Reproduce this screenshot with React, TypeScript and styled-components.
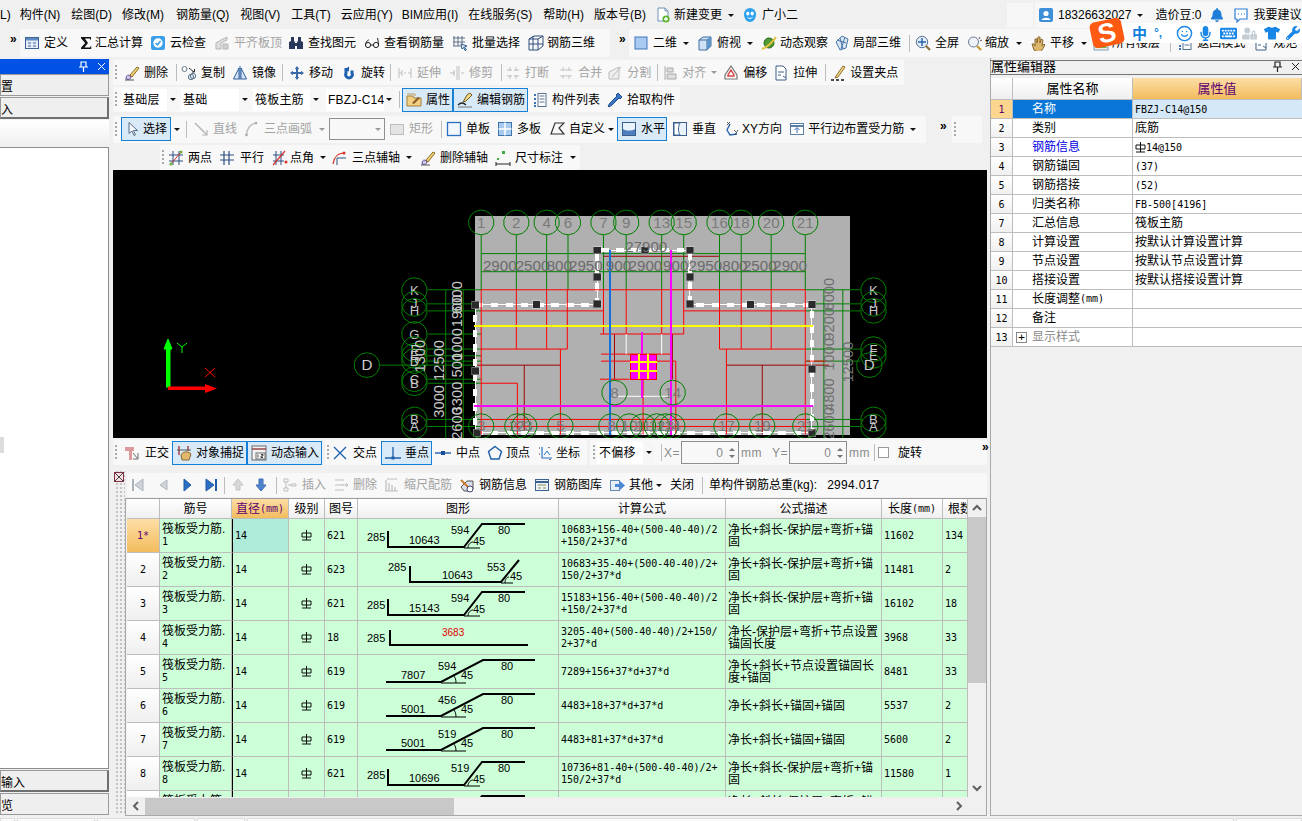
import React from 'react';
import styled, { createGlobalStyle } from 'styled-components';
import { FaMicrophone, FaKeyboard, FaTshirt, FaWrench, FaBell, FaUserLock } from 'react-icons/fa';
import { Smile } from 'lucide-react';

const Global = createGlobalStyle`
  html, body { margin: 0; padding: 0; background: #f0f0f0; overflow: hidden; }
  * { box-sizing: border-box; }
`;

const SANS = '"Liberation Sans", "Noto Sans CJK SC", sans-serif';
const MONO = '"DejaVu Sans Mono", "Noto Sans CJK SC", monospace';

const Page = styled.div`
  position: relative; width: 1302px; height: 821px; overflow: hidden; background: #f0f0f0;
  font: 12px/14px ${SANS}; color: #000; display: flex; flex-direction: column;
`;
const MenuBar = styled.div`
  height: 28px; flex: none; display: flex; align-items: center; background: #f0f0f0; padding-top: 2px;
`;
const MenuItem = styled.span<{ $mr?: number }>`
  margin-right: ${p => p.$mr ?? 10}px; white-space: nowrap; display: inline-flex; align-items: center;
`;
const GhostBox = styled.div`
  width: 26px; height: 24px; margin: 0 2px 0 auto; background: #f7f7f7;
`;
const UserBox = styled.div`
  width: 267px; height: 26px; background: #f7f7f7; display: flex; align-items: center; padding-left: 3px;
`;
const TopRow = styled.div`
  height: 30px; flex: none; display: flex; align-items: center;
`;
const Chevrons = styled.span<{ $w: number }>`
  width: ${p => p.$w}px; flex: none; align-self: flex-start; padding-top: 6px; padding-left: ${p => p.$w - 10}px;
  font: bold 12px/10px ${SANS}; letter-spacing: -1px;
`;
const Bar = styled.div<{ $w?: number; $ml?: number; $h?: number; $pl?: number }>`
  ${p => (p.$w ? `width:${p.$w}px;` : '')}
  margin-left: ${p => p.$ml ?? 0}px;
  height: ${p => p.$h ?? 25}px; flex: none; display: flex; align-items: center;
  padding-left: ${p => p.$pl ?? 2}px; background: #f8f8f8; border-radius: 2px; white-space: nowrap;
`;
const Grip = styled.span<{ $mr?: number }>`
  width: 2px; height: 15px; flex: none; margin-right: ${p => p.$mr ?? 7}px;
  background: repeating-linear-gradient(to bottom, #a8a8a8 0 2px, transparent 2px 4px);
`;
const Sep = styled.span<{ $mr?: number; $ml?: number }>`
  width: 1px; height: 17px; flex: none; background: #bcbcbc;
  margin-left: ${p => p.$ml ?? 0}px; margin-right: ${p => p.$mr ?? 5}px;
`;
const ToolItem = styled.span<{ $off?: boolean; $mr?: number }>`
  display: inline-flex; align-items: center; flex: none; margin-right: ${p => p.$mr ?? 8}px;
  color: ${p => (p.$off ? '#a3a3a3' : '#000')};
`;
const Pressed = styled.span<{ $mr?: number; $w: number }>`
  display: inline-flex; align-items: center; flex: none; width: ${p => p.$w}px; height: 24px; padding-left: 3px;
  background: #d8e9f8; border: 1px solid #167fd6; margin-right: ${p => p.$mr ?? 0}px;
`;
const IconBox = styled.svg<{ $gap?: number }>`
  width: 16px; height: 16px; flex: none; margin-right: ${p => p.$gap ?? 4}px; display: block;
`;
const Caret = styled.span<{ $ml?: number; $mr?: number; $off?: boolean }>`
  width: 0; height: 0; flex: none; border-left: 3px solid transparent; border-right: 3px solid transparent;
  border-top: 3px solid ${p => (p.$off ? '#9a9a9a' : '#111')};
  margin-left: ${p => p.$ml ?? 5}px; margin-right: ${p => p.$mr ?? 8}px;
`;
const Combo = styled.span<{ $w: number; $mr?: number; $mono?: boolean }>`
  width: ${p => p.$w}px; height: 22px; flex: none; display: flex; align-items: center; background: #fff;
  margin-right: ${p => p.$mr ?? 3}px; padding-left: 2px; position: relative;
`;
const ComboText = styled.span`flex: 1; letter-spacing: .2px;`;
const ComboArrow = styled.span`
  width: 11px; height: 100%; background: #f6f6f6; display: flex; align-items: center; justify-content: center;
`;
const FrameCombo = styled.span`
  width: 56px; height: 22px; flex: none; margin-right: 4px; background: #f8f8f8; border: 1px solid #8f8f8f;
  display: flex; align-items: center; justify-content: flex-end; padding-right: 3px;
`;

const Body = styled.div`
  flex: none; height: 758px; display: flex; align-items: stretch;
`;
const LeftPanel = styled.div`
  width: 109px; flex: none; padding-top: 1px; display: flex; flex-direction: column; overflow: hidden;
`;
const BlueTitle = styled.div`
  height: 15px; flex: none; background: #0052e4; display: flex; align-items: center; justify-content: flex-end; padding-right: 4px; gap: 9px; width: 110px;
`;
const LeftTab = styled.div<{ $deep?: boolean; $h?: number }>`
  height: ${p => p.$h ?? 22}px; flex: none; background: #efefef; border: 1px solid #9a9a9a; padding-top: 5px;
  ${p => (p.$deep ? 'border-right:2px solid #707070;border-bottom:2px solid #707070;' : '')}
  margin-bottom: 1px; white-space: nowrap; direction: rtl; text-align: left; overflow: hidden; padding-right: 4px;
`;
const LeftFill = styled.div`
  height: 27px; flex: none; background: linear-gradient(#fff, #efefef);
`;
const LeftList = styled.div`
  flex: 1; background: #fff; border: 1px solid #8c8c8c; border-left: 0; position: relative; margin-bottom: 1px;
`;
const LeftStub = styled.span`
  position: absolute; left: 0; top: 289px; width: 4px; height: 16px; background: #dcdcdc;
`;
const Center = styled.div`
  width: 874px; margin-left: 4px; flex: none; display: flex; flex-direction: column;
`;
const ToolRow = styled.div<{ $h?: number; $mb?: number; $pt?: number }>`
  height: ${p => p.$h ?? 27}px; flex: none; display: flex; align-items: center; padding-top: ${p => p.$pt ?? 2}px;
`;
const Canvas = styled.svg`
  width: 874px; height: 268px; flex: none; background: #000; display: block;
`;
const Lower = styled.div`
  flex: 1; display: flex; margin-top: 5px; min-height: 0;
`;
const Gutter = styled.div`
  width: 11px; margin-left: 1px; flex: none; padding-top: 2px; height: 345px;
  background-image: radial-gradient(#c4c4c4 .8px, transparent 1px);
  background-size: 4px 4px; background-position: 1px 12px; background-repeat: repeat;
`;
const CloseMark = styled.svg`width: 10px; height: 10px; display: block; background: #f0f0f0;`;
const TableCol = styled.div`width: 862px; flex: none; display: flex; flex-direction: column;`;
const TableBar = styled.div`
  height: 24px; margin-top: 3px; margin-left: 2px; flex: none; background: #f8f8f8; display: flex; align-items: center; padding-left: 4px; white-space: nowrap;
`;
const TableBox = styled.div`
  margin-top: 1px; width: 862px; height: 318px; flex: none; border: 1px solid #a8a8a8; border-top-color: #9c9c9c; background: #f0f0f0; padding-left: 1px; display: grid;
  grid-template-columns: 841px 18px; grid-template-rows: 298px 18px;
`;
const GridClip = styled.div`overflow: hidden; background: #fff;`;
const COLS = '33px 72px 57px 36px 33px 201px 167px 156px 61px 25px';
const GridRow = styled.div<{ $h: number }>`
  display: grid; grid-template-columns: ${COLS}; height: ${p => p.$h}px;
`;
const HeadCell = styled.div<{ $sel?: boolean; $mark?: boolean }>`
  display: flex; align-items: center; justify-content: center; white-space: nowrap; overflow: hidden;
  border-right: 1px solid #bdbdbd; border-bottom: 1px solid #bdbdbd;
  background: ${p => (p.$sel ? 'linear-gradient(#fddea6, #f2bc5e)' : 'linear-gradient(#ffffff, #efefef)')};
  color: ${p => (p.$sel ? '#5e0070' : '#000')};
`;
const Mono = styled.span`font: 10px/12px ${MONO};`;
const RowHead = styled(HeadCell)`font: 10px/12px ${MONO};`;
const Cell = styled.div<{ $sel?: boolean; $mark?: boolean; $mono?: boolean; $center?: boolean; $pl?: number }>`
  display: flex; align-items: center; overflow: hidden; white-space: nowrap;
  padding-left: ${p => p.$pl ?? 2}px;
  ${p => (p.$center ? 'justify-content:center;padding-left:0;' : '')}
  border-right: 1px solid #bdbdbd; border-bottom: 1px solid #bdbdbd;
  ${p => (p.$mark ? 'border-left:1px solid #000;' : '')}
  background: ${p => (p.$sel ? '#aeebd9' : '#ccffd8')};
  line-height: 12px;
  ${p => (p.$mono ? `font:10px/12px ${MONO};` : '')}
`;
const TwoLine = styled.div`line-height: 12px;`;
const VScroll = styled.div`
  display: flex; flex-direction: column; align-items: center; background: #f0f0f0;
`;
const Thumb = styled.div`width: 18px; height: 166px; background: #c8c8c8; flex: none;`;
const ScrollBtn = styled.div`height: 18px; flex: none; display: flex; align-items: center; justify-content: center; color: #606060; width: 18px;`;
const HScroll = styled.div`display: flex; align-items: center; background: #f0f0f0;`;
const HThumb = styled.div`width: 309px; height: 17px; background: #c8c8c8; flex: none;`;
const Right = styled.div`
  width: 312px; margin-left: 3px; flex: none; display: flex; flex-direction: column; padding-top: 2px; height: 758px;
  border-left: 1px solid #aaa; border-bottom: 1px solid #aaa;
`;
const RightTitle = styled.div`
  height: 15px; flex: none; border-top: 1px solid #777; border-bottom: 1px solid #777; margin-left: -1px;
  display: flex; align-items: center; font-size: 13px; padding-left: 1px; padding-bottom: 2px; gap: 8px; overflow: hidden; justify-content: space-between; padding-right: 2px;
`;
const PropTable = styled.div`
  margin-top: 3px; display: grid; grid-template-columns: 22px 120px 169px; grid-auto-rows: 19px; background: #fff;
`;
const PropHead = styled.div<{ $sel?: boolean }>`
  height: 22px; margin-bottom: -3px; display: flex; align-items: center; justify-content: center;
  border-right: 1px solid #bdbdbd; border-bottom: 1px solid #bdbdbd;
  background: ${p => (p.$sel ? 'linear-gradient(#fddea6, #f2bc5e)' : 'linear-gradient(#fff, #efefef)')};
  color: ${p => (p.$sel ? '#5e0070' : '#000')};
  font-size: 13px; position: relative; z-index: 1;
`;
const PropIndex = styled.div<{ $sel?: boolean }>`
  margin-top: 3px; margin-bottom: -3px; display: flex; align-items: center; justify-content: center; font: 10px ${MONO};
  border-right: 1px solid #bdbdbd; border-bottom: 1px solid #bdbdbd;
  background: ${p => (p.$sel ? '#fcd58f' : 'linear-gradient(#fff, #f0f0f0)')};
  color: ${p => (p.$sel ? '#5e0070' : '#000')};
`;
const PropName = styled.div<{ $sel?: boolean; $color?: string; $plus?: boolean }>`
  margin-top: 3px; margin-bottom: -3px; display: flex; align-items: center; padding-left: ${p => (p.$plus ? 3 : 19)}px;
  border-right: 1px solid #bdbdbd; border-bottom: 1px solid #bdbdbd;
  background: ${p => (p.$sel ? '#0a76d8' : '#fff')}; color: ${p => (p.$sel ? '#fff' : p.$color ?? '#000')};
`;
const PropValue = styled.div<{ $sel?: boolean; $mono?: boolean }>`
  margin-top: 3px; margin-bottom: -3px; display: flex; align-items: center; padding-left: 2px;
  border-bottom: 1px solid #bdbdbd;
  background: ${p => (p.$sel ? '#d5e8f8' : '#fff')};
  ${p => (p.$mono ? `font:10px ${MONO};` : '')}
`;
const PlusBox = styled.span`
  width: 11px; height: 11px; border: 1px solid #888; display: inline-flex; align-items: center; justify-content: center;
  font: 11px/9px ${MONO}; margin-right: 5px; color: #000; flex: none; background: #fff;
`;
const Status = styled.div`
  flex: none; height: 5px; display: flex; padding-top: 2px; gap: 2px; background: #f0f0f0;
`;
const StatusCell = styled.span<{ $w?: number }>`
  ${p => (p.$w ? `width:${p.$w}px;flex:none;` : 'flex:1;')} height: 3px; background: #fafafa; border: 1px solid #ddd; border-bottom: 0;
`;
const Sogou = styled.div`
  position: absolute; left: 1105px; top: 23px; width: 197px; height: 20px; background: #fff;
  display: flex; align-items: center; padding-left: 27px; gap: 0;
`;
const SogouLogo = styled.div`
  position: absolute; left: -14px; top: -3px; width: 32px; height: 26px; background: #ff5a12; border-radius: 5px;
  transform: rotate(-12deg); color: #fff; font: bold 27px/26px ${SANS}; text-align: center;
`;
const SogouCn = styled.span`
  width: 22px; color: #0f7fe0; font: bold 15px/20px "Noto Sans CJK SC", sans-serif; flex: none;
`;
const SogouSlot = styled.span`
  width: 22px; flex: none; display: flex; justify-content: flex-start; align-items: center; color: #1a86e6; font-weight: bold;
`;
const FieldLabel = styled.span<{ $mr?: number; $off?: boolean }>`
  margin-right: ${p => p.$mr ?? 3}px; color: #8a8a8a; font-size: 12px; flex: none; letter-spacing: .5px;
`;
const SpinBox = styled.span`
  width: 58px; height: 23px; flex: none; border: 1px solid #8f8f8f; display: flex; align-items: center; justify-content: flex-end;
  color: #8a8a8a; background: #f8f8f8; font-size: 12px; margin-right: 2px; padding-right: 3px; gap: 6px;
`;
const SpinArrows = styled.span`display: flex; flex-direction: column; gap: 4px;`;
const SpinUp = styled.span<{ $down?: boolean }>`
  width: 0; height: 0; border-left: 3px solid transparent; border-right: 3px solid transparent;
  ${p => (p.$down ? 'border-top:3px solid #777;' : 'border-bottom:3px solid #777;')}
`;
const Check = styled.span`
  width: 11px; height: 11px; border: 1px solid #9a9a9a; margin-right: 9px; flex: none; background: #fff;
`;
const RedNum = styled.text`fill: #e00000; font: 10px ${SANS};`;
const Weight = styled.span`margin-left: 10px; letter-spacing: .3px;`;

/* ---- icons ---- */
const P = (d: string, fill = 'none', stroke = 'none', w = 1) => <path d={d} fill={fill} stroke={stroke} strokeWidth={w} />;
const PEN = <>{P('M2 14c0-3 1-4 3-4l2 2c0 2-2 3-5 2z', '#cfc6e8', '#6d5a9e')}{P('M6 10l7-8 2 1-7 9z', '#f2d27a', '#8a6d20')}{P('M1 15h9', 'none', '#555')}</>;
const icons: Record<string, React.ReactNode> = {
  def: <><rect x="1.5" y="2.5" width="13" height="11" fill="#e7eef8" stroke="#3d6394" /><rect x="2" y="3" width="12" height="2.5" fill="#5d8cc4" />{P('M4 8h3M9 8h3M4 11h3M9 11h3', 'none', '#3d6394')}</>,
  sigma: P('M3 2h10v3.5l-1.2-2H6.8L10 8l-3.6 4.5h5.6l1.2-2V14H3v-1.2L7.2 8 3 3.2z', '#111'),
  cloud: <><rect x="1" y="1" width="14" height="14" rx="2" fill="#3a9fe8" /><circle cx="8" cy="8" r="4.7" fill="#fff" />{P('M5.6 8l1.8 1.8L10.6 6', 'none', '#3a9fe8', 1.6)}</>,
  flat: <>{P('M2 14V8l5-3 6-3v3l-6 3v6z', '#dedede', '#b5b5b5')}{P('M9 14V9h5v5z', '#cfcfcf', '#b5b5b5')}</>,
  binoc: <>{P('M3 2h3v4l1 1v7H1V7l2-1zM10 2h3v4l2 1v7H9V7l1-1z', '#29395c')}{P('M7 8h2v3H7z', '#29395c')}</>,
  glasses: <><circle cx="4" cy="10" r="2.6" fill="none" stroke="#222" /><circle cx="12" cy="10" r="2.6" fill="none" stroke="#222" />{P('M1.5 10C2 6 4 5 5 5M14.5 10c0-4-1-6-1-7M6.5 10h3', 'none', '#222')}</>,
  batch: <>{P('M2 1v10M6 1v10M10 1v8M1 3h12M1 7h12M1 11h8', 'none', '#5d6f86')}{P('M9 9l6 2-2.5 1 2 3-1.5.5-1.5-3L10 14z', '#dce8f6', '#385d8c')}</>,
  rebar3d: <>{P('M1 4l5-3h9v10l-5 4H1zM1 4h9v11M10 4l5-3M5 1v14M1 9h14', 'none', '#2d4d78')}</>,
  sq2d: <rect x="2" y="2" width="12" height="12" fill="#a9cbf2" stroke="#3f76ba" />,
  cube: <>{P('M2 5l4-3h8v9l-4 4H2z', '#cfe1f4', '#3e6e9f')}{P('M2 5h8v10M10 5l4-3', 'none', '#3e6e9f')}{P('M10 5l4-3v9l-4 4z', '#5e95c9')}</>,
  orbit: <><circle cx="8" cy="8" r="5" fill="#4f9a35" stroke="#2c6a1c" />{P('M1 14C5 13 12 7 15 2', 'none', '#e5c23f', 2)}</>,
  local3d: <>{P('M8 1l6 3-2 9-6 2-4-8z', '#d8e6f4', '#4a76a6')}{P('M3 5l9 3M6 3l3 11M11 2l-4 12', 'none', '#4a76a6')}</>,
  zoomfull: <><circle cx="7" cy="7" r="5.7" fill="#e4eefb" stroke="#5a7394" />{P('M7 3v8M3 7h8', 'none', '#2563b2', 1.4)}{P('M11 11l4 4', 'none', '#8a6a30', 2)}</>,
  mag: <><circle cx="6.5" cy="7" r="5" fill="#eef3fa" stroke="#6b7b8f" />{P('M10 11l4 4', 'none', '#c49a30', 2.2)}{P('M13 2l-1 2M15 5l-2 1', 'none', '#555')}</>,
  hand: <>{P('M4 15L2 9l2 0 1 2V4l2 0v4l1-6 2 0v6l1-4 2 1-1 6 2-2 1 1-3 5-2 3z', '#dcb66a', '#8a6a30')}</>,
  floor: <><rect x="1" y="2" width="14" height="13" fill="#f4ecd8" stroke="#7c9fc0" />{P('M2 13l4-6 3 3 2-2 3 5z', '#6bb04a')}{P('M12 1l3 3-3 1z', '#e0341f')}</>,
  newdoc: <>{P('M3 1h7l3 3v10H3z', '#fff', '#6f92b7')}{P('M10 1v3h3', 'none', '#6f92b7')}<circle cx="11" cy="12" r="3.6" fill="#5cb531" />{P('M11 10v4M9 12h4', 'none', '#fff', 1.3)}</>,
  pen: PEN,
  copy: <><circle cx="3.5" cy="4" r="2.5" fill="#fff" stroke="#60788f" /><circle cx="10" cy="12" r="2.7" fill="#dfe6ee" stroke="#60788f" /><circle cx="12" cy="11" r="2.7" fill="none" stroke="#60788f" />{P('M8 3l5 4M11 7h2.5V4', 'none', '#333')}</>,
  mirror: <>{P('M7 3L1.5 14H7z', '#d9e8f7', '#2b5e9d')}{P('M9 3l5.5 11H9z', '#d9e8f7', '#2b5e9d')}{P('M8 1v14', 'none', '#2b5e9d')}</>,
  move: P('M8 1l2.2 3H9v3h3V5.8L15 8l-3 2.2V9H9v3h1.2L8 15l-2.2-3H7V9H4v1.2L1 8l3-2.2V7h3V4H5.8z', '#3a6ba8'),
  rotate: <>{P('M5 3v5a3.4 3.4 0 1 0 6 0V5.5', 'none', '#1d5fb0', 3)}{P('M8 1.5L3.5 4.5 8 6.5z', '#1d5fb0')}</>,
  extend: P('M2 3v10M14 3v10M2 8h3M7 8h2M11 8h3M5 5v6', 'none', '#bfbfbf'),
  trim: P('M8 1v14M10 1v14M1 8h5M12 8h3M5 5v6', 'none', '#bfbfbf'),
  brk: P('M2 5h5M9 5h5M2 11h5M9 11h5M5 2v4M11 2v4M5 10v4M11 10v4', 'none', '#bfbfbf'),
  merge: P('M2 5h12M2 11h12M5 2v4M11 2v4M5 10v4M11 10v4', 'none', '#c4c4c4'),
  split: <>{P('M2 14V7l10-5v12z', '#eee', '#bbb')}{P('M14 2L5 12', 'none', '#bbb')}</>,
  align: <>{P('M3 1v14', 'none', '#aaa')}{P('M5 3h6v4H5zM5 9h9v5H5z', '#ddd', '#aaa')}</>,
  offset: <>{P('M8 1l6 9v4H2v-4z', 'none', '#777', 1.2)}{P('M8 5l3 5v1H5v-1z', 'none', '#d94444', 1.4)}</>,
  stretch: <>{P('M3 1h7l3 3v11H3z', '#fff', '#3c5f88')}{P('M5 7h6M5 10h3M10 11l3 2', 'none', '#3c5f88')}</>,
  grip: <>{P('M6 11l7-10 2 1-7 10-3 1z', '#f5d98e', '#8a6d20')}{P('M1 15h3M6 15h3M11 15h3', 'none', '#111', 1.5)}</>,
  attr: <>{P('M1 4h6l1 2h7v8H1z', '#f1cf85', '#a5813a')}{P('M6 11l6-6 2 1-6 6z', '#8a5a20')}{P('M1 2h8v2', 'none', '#c49a4a')}</>,
  edit: <>{P('M10 3l3-2 2 2-6 6-3 1z', '#f3d988', '#6f5a1e')}{P('M1 13c3-3 6-2 8 0', 'none', '#222', 1.2)}{P('M1 15h14', 'none', '#777')}</>,
  list: <>{P('M2 3h2M2 7h2M2 11h2', 'none', '#3b74b5', 2)}{P('M2 14h2', 'none', '#3b74b5', 2)}<rect x="6" y="1.5" width="8" height="13" fill="#fff" stroke="#5a7394" />{P('M7.5 4h5M7.5 7h5M7.5 10h5', 'none', '#5a7394')}</>,
  pick: <>{P('M11 1l4 4-2 2-1-1-7 7-3 2-1-1 2-3 7-7-1-1z', '#3c78c8', '#204f8e')}</>,
  cursor: P('M4 1.5v11l3-2.5 2 4.5 1.5-.7-2-4.3h4z', '#f3f7fc', '#5a6d88'),
  line: <>{P('M2 2l12 12', 'none', '#b8b8b8', 1.6)}{P('M14 9v5H9', 'none', '#b8b8b8', 1.2)}</>,
  arc: <>{P('M2.5 14C3 7 6 3 12 2', 'none', '#bfbfbf', 1.6)}<circle cx="2.5" cy="14" r="1.3" fill="#aaa" /><circle cx="12" cy="2" r="1.3" fill="#aaa" /></>,
  rectg: <rect x="1.5" y="3.5" width="13" height="10" fill="#e4e4e4" stroke="#bdbdbd" />,
  single: <rect x="1.5" y="1.5" width="13" height="13" fill="#f2f7fd" stroke="#2b6fc2" strokeWidth="1.3" />,
  multi: <><rect x="1.5" y="1.5" width="13" height="13" fill="#a9cbef" stroke="#3e72ad" />{P('M8 1.5v13M1.5 8h13', 'none', '#fff', 1.5)}</>,
  custom: P('M2 13L6 2h9l-5 5 5 6z', 'none', '#333', 1.2),
  horiz: <><rect x="1.5" y="1.5" width="13" height="13" fill="#eaf2fb" stroke="#3a5f8e" />{P('M2 8c3 2 9 2 12 0v6H2z', '#4d80bd')}</>,
  vert: <><rect x="1.5" y="1.5" width="13" height="13" fill="#eaf2fb" stroke="#3a5f8e" />{P('M8 2c-2 3-2 9 0 12H2V2z', '#fff', '#3a5f8e')}</>,
  xy: <>{P('M7 3l-3 6 3 5 7-1', 'none', '#2666b0', 1.4)}{P('M4 1l3 3M7 1L4 4M11 9l2 2M15 9l-3 5', 'none', '#333', .8)}</>,
  para: <><rect x="1.5" y="2.5" width="13" height="11" fill="#fff" stroke="#5b7ea6" />{P('M2 5h12', 'none', '#5b7ea6', 2)}{P('M8 12V7M5.5 9L8 6.5 10.5 9', 'none', '#3d6fb0')}</>,
  twop: <>{P('M1 5h14M1 11h14M5 1v14M11 1v14', 'none', '#2c4e82')}{P('M2 15L14 1', 'none', '#d8322a')}<circle cx="3" cy="14" r="1.6" fill="#6cb33f" /><circle cx="13" cy="2" r="1.6" fill="#6cb33f" /></>,
  parallel: P('M1 5h14M1 10h14M5 1v14M10 1v14', 'none', '#2c4e82', 1.2),
  angle: <>{P('M1 5h11M1 11h11M4 1v14M9 1v14', 'none', '#2c4e82')}{P('M1 15L13 1', 'none', '#d8322a', 1.2)}<circle cx="14" cy="12" r="1.5" fill="#d8322a" /></>,
  arc3: <>{P('M2 14C3 7 7 3 13 3', 'none', '#d8322a', 1.2)}{P('M6 8h9M6 8v7', 'none', '#2c4e82')}<circle cx="13" cy="3" r="1.5" fill="#d8322a" /></>,
  dim: <>{P('M1 14h14M1 12v4M15 12v4', 'none', '#222')}<rect x="7" y="1" width="3" height="3" fill="#3faa3f" /><rect x="2" y="8" width="2" height="2" fill="#3faa3f" /></>,
  ortho: <>{P('M1 2h9v4H8v9H5V6H1z', '#dd9a9a')}{P('M9 8l5 6M14 8v6H9', 'none', '#6c6c6c')}</>,
  snap: <>{P('M3 1v9M12 1v5', 'none', '#a23b3b', 1.4)}{P('M1 5h14', 'none', '#555')}{P('M5 10c2-4 8-4 10-1l-2 6H6z', '#dfba6e', '#8a6a30')}</>,
  dyn: <><rect x="1" y="1" width="14" height="14" fill="#f3f3f3" stroke="#6a6a6a" />{P('M1 4h14', 'none', '#8f3b3b', 1.4)}<rect x="5" y="8" width="9" height="6" fill="#fff" stroke="#6a6a6a" />{P('M7 9.5v3M10 9.5h2v1.5h-2v1.5h2', 'none', '#111', .8)}</>,
  xpoint: P('M2 2l12 12M14 2L2 14', 'none', '#1f63b0', 1.4),
  perp: <>{P('M0 13h16M8 2v11', 'none', '#1d5fa8', 1.3)}<rect x="6.5" y="11.5" width="3" height="3" fill="#1d5fa8" /></>,
  midp: <>{P('M0 8h16', 'none', '#1d5fa8', 1.4)}<rect x="6" y="6" width="4" height="4" fill="#1d4f98" /></>,
  vertex: P('M8 1.5l6.5 5-2.5 7.5H4L1.5 6.5z', 'none', '#1d5fa8', 1.4),
  coord: <>{P('M5 2v11h10', 'none', '#2a74c2', 1.2)}{P('M7 10l3-4 3 4', 'none', '#2a74c2', 1)}{P('M2 3h1M2 9h1M12 2v1M13 14v1', 'none', '#333', 1.2)}</>,
  first: <>{P('M2 2v12', 'none', '#aab2bc', 2)}{P('M12 2v12L4 8z', '#cfd4da', '#aab2bc')}</>,
  prev: P('M12 3v10L5 8z', '#cfd4da', '#b2b8c0'),
  next: P('M5 2v12l7-6z', '#2b6ec2', '#1f5aa6'),
  last: <>{P('M3 2v12l8-6z', '#2b6ec2', '#1f5aa6')}{P('M13 2v12', 'none', '#1f5aa6', 2)}</>,
  up: P('M8 2l5 6h-3v5H6V8H3z', '#d8d8d8', '#c4c4c4'),
  down: P('M6 2h4v6h3l-5 6-5-6h3z', '#4e84ce', '#3a6cb3'),
  ins: P('M2 2h4v3H2zM2 11h4v3H2zM9 7h5v2H9zM4 5v6M9 8H6', 'none', '#bdbdbd'),
  del: P('M2 3h9M2 8h9M2 13h9M10 8h5M13 6l2 2-2 2', 'none', '#bdbdbd'),
  scale: P('M1 14h13M2 3v11M5 6v8M8 8v6M11 10v4M3 2h10', 'none', '#bdbdbd', 1.2),
  info: <>{P('M2 10l6-6h6v8l-2 2H5z', '#d8dfe8', '#555')}{P('M2 3l7 7', 'none', '#d07a2a', 2)}<circle cx="11" cy="12" r="3" fill="#fff" stroke="#447" /></>,
  lib: <><rect x="1.5" y="2.5" width="13" height="11" fill="#eef3fa" stroke="#3b618f" />{P('M2 5h12', 'none', '#3b618f', 2)}{P('M4 8h8M4 11h3M9 11h3', 'none', '#8a8f55')}</>,
  other: <><rect x="1.5" y="3.5" width="9" height="10" fill="#e6eef8" stroke="#6688ae" />{P('M6 7h5V4l5 4.5-5 4.5V10H6z', '#4a87d4')}</>,
  avatar: <><rect x="1" y="1" width="14" height="14" rx="2" fill="#3c8ed9" /><circle cx="8" cy="6.5" r="2.6" fill="#fff" />{P('M3.5 13c1-3 8-3 9 0z', '#fff')}</>,
  suggest: <>{P('M2 2h12v10H7l-3 3v-3H2z', '#fff', '#2f7fd6', 1.2)}{P('M5 7h.8M8 7h.8M11 7h.8', 'none', '#2f7fd6', 1.4)}</>,
  bot: <>{P('M2 7a6 6 0 0 1 12 0c0 5-3 8-6 8S2 12 2 7z', '#2da0ee')}<ellipse cx="5.8" cy="6.5" rx="1.6" ry="2" fill="#fff" /><ellipse cx="10.2" cy="6.5" rx="1.6" ry="2" fill="#fff" />{P('M5.5 10.5c1.2 1.2 3.8 1.2 5 0', 'none', '#fff')}</>,
};
const Ic = ({ n, gap }: { n: string; gap?: number }) => <IconBox $gap={gap} viewBox="0 0 16 16">{icons[n]}</IconBox>;
const T = ({ i, t, off, mr, gap }: { i: string; t: string; off?: boolean; mr?: number; gap?: number }) => (
  <ToolItem $off={off} $mr={mr}><Ic n={i} gap={gap} />{t}</ToolItem>
);
const Press = ({ i, t, w, mr }: { i: string; t: string; w: number; mr?: number }) => (
  <Pressed $w={w} $mr={mr}><Ic n={i} />{t}</Pressed>
);
const Pick = ({ t, w, mr }: { t: string; w: number; mr?: number }) => (
  <Combo $w={w} $mr={mr}><ComboText>{t}</ComboText><ComboArrow><Caret $ml={0} $mr={0} /></ComboArrow></Combo>
);

/* ---- CAD ---- */
const G = '#008000', R = '#ff0000', D = '#a00000';
type Seg = [number, number, number, number];
const hv = (color: string, w: number, segs: Seg[]) => segs.map((s, i) => <line key={color + w + i} x1={s[0]} y1={s[1]} x2={s[2]} y2={s[3]} stroke={color} strokeWidth={w} vectorEffect="non-scaling-stroke" />);
const ring = (cx: number, cy: number) => Array.from({ length: 14 }, (_, k) => {
  const a = (k / 14) * Math.PI * 2 + .2;
  return `${(cx + 37 * Math.cos(a)).toFixed(1)},${(cy + 37 * Math.sin(a)).toFixed(1)}`;
}).join(' ');
const Axis = ({ x, y, t, c = '#7a7a7a', s = 44 }: { x: number; y: number; t: string; c?: string; s?: number }) => (
  <g>
    <polygon points={ring(x, y)} fill="none" stroke={G} strokeWidth="1" vectorEffect="non-scaling-stroke" />
    <text x={x} y={y + s * .36} fill={c} fontSize={s} textAnchor="middle" fontFamily="Liberation Sans, sans-serif">{t}</text>
  </g>
);
const Dim = ({ x, y, t, c = '#6b6b6b' }: { x: number; y: number; t: string; c?: string }) => (
  <text x={x} y={y} fill={c} fontSize="44" fontFamily="Liberation Sans, sans-serif">{t}</text>
);
const VDim = ({ x, y, t, c = '#c8c8c8' }: { x: number; y: number; t: string; c?: string }) => (
  <text transform={`translate(${x} ${y}) rotate(-90)`} fill={c} fontSize="44" fontFamily="Liberation Sans, sans-serif">{t}</text>
);
const Column = ({ x, y }: { x: number; y: number }) => <rect x={x - 11} y={y - 11} width="22" height="22" fill="#2a2a2a" stroke="#f4f4f4" strokeWidth="1" />;

const Drawing = () => (
  <Canvas viewBox="113 170 874 268">
    <g stroke="#00ff00" strokeWidth="1">
      <rect x="166.5" y="345" width="3.5" height="42" fill="#00ff00" />
      <path d="M168 339l4 10h-8z" fill="#00ff00" />
      <path d="M177 343l5 4 5-4M182 347v6" fill="none" />
    </g>
    <rect x="168" y="386.5" width="38" height="3.5" fill="#ff0000" />
    <path d="M205 384l12 4.5-12 4.5z" fill="#ff0000" />
    <path d="M205 368l10 9M215 368l-10 9" stroke="#ff0000" fill="none" />
    <g transform="translate(340 200) scale(.3444 .335)" shapeRendering="crispEdges">
      <rect x="392" y="48" width="1088" height="652" fill="#b0b0b0" />
      {hv(G, 1, [[410, 104, 410, 268], [512, 104, 512, 268], [600, 104, 600, 268], [662, 104, 662, 268], [765, 104, 765, 268], [831, 104, 831, 268], [934, 104, 934, 268], [998, 104, 998, 268], [1102, 104, 1102, 268], [1165, 104, 1165, 268], [1252, 104, 1252, 268], [1351, 104, 1351, 268],
        [410, 160, 1351, 160], [410, 214, 1351, 214],
        [254, 268, 410, 268], [254, 310, 410, 310], [254, 331, 410, 331], [254, 400, 410, 400], [254, 445, 410, 445], [254, 465, 410, 465], [254, 481, 410, 481], [254, 535, 410, 535], [254, 547, 410, 547], [254, 655, 410, 655], [254, 676, 410, 676],
        [1351, 268, 1511, 268], [1351, 310, 1511, 310], [1351, 331, 1511, 331], [1351, 445, 1511, 445], [1351, 481, 1511, 481], [1351, 655, 1511, 655], [1351, 676, 1511, 676], [115, 493, 392, 493],
        [307, 268, 307, 716], [1460, 268, 1460, 716], [1405, 268, 1405, 716], [358, 268, 358, 716]])}
      {hv(D, 1, [[765, 168, 1100, 168], [392, 493, 640, 493], [1122, 493, 1420, 493], [535, 493, 535, 700], [1226, 493, 1226, 700], [797, 400, 797, 535], [965, 400, 965, 535]])}
      <path d="M393 313H747V150H1016V313H1370V695H393Z" fill="none" stroke="#fff" strokeWidth="3" />
      <path d="M393 313H747V150H1016V313H1370V695H393Z" fill="none" stroke="#fff" strokeWidth="12" strokeDasharray="22 22" />
      {[[747, 150], [1016, 150], [885, 150], [747, 230], [1016, 230], [747, 310], [1016, 310], [393, 313], [570, 312], [1192, 312], [1370, 312], [393, 510], [1370, 505], [398, 695], [1370, 695]].map(([x, y]) => <Column key={x + '-' + y} x={x} y={y} />)}
      {hv(R, 1, [[410, 268, 1351, 268], [410, 331, 765, 331], [998, 331, 1351, 331], [410, 268, 410, 700], [512, 268, 512, 445], [600, 268, 600, 445], [660, 268, 660, 445], [765, 268, 765, 400], [831, 268, 831, 400], [934, 268, 934, 400], [998, 268, 998, 400], [1102, 268, 1102, 445], [1165, 268, 1165, 445], [1252, 268, 1252, 445], [1351, 268, 1351, 700],
        [410, 445, 660, 445], [1102, 445, 1351, 445], [755, 400, 998, 400], [640, 445, 640, 700], [1122, 445, 1122, 700], [410, 547, 515, 547], [515, 547, 515, 700], [410, 655, 1351, 655], [410, 676, 1351, 676], [758, 460, 965, 460], [758, 481, 975, 481], [975, 481, 975, 700], [755, 535, 840, 535], [880, 535, 880, 700], [1355, 481, 1415, 481]])}
      {hv('#ffffff', 1, [[831, 400, 831, 460], [934, 400, 934, 460], [800, 586, 960, 586]])}
      {hv('#ffff00', 2, [[390, 375, 1372, 375]])}
      {hv('#ff00ff', 2, [[390, 615, 1372, 615], [960, 150, 960, 700], [876, 395, 876, 590]])}
      {hv('#1070e0', 2, [[784, 150, 784, 700]])}
      <rect x="843" y="461" width="77" height="74" fill="#ff00ff" stroke="#ff0000" strokeWidth="3" />
      {hv('#ffff00', 2, [[868, 461, 868, 535], [895, 461, 895, 535], [843, 485, 920, 485], [843, 510, 920, 510]])}
      {[[1, 410], [2, 512], [4, 600], [6, 662], [7, 765], [9, 831], [13, 934], [15, 998], [16, 1102], [18, 1165], [20, 1252], [21, 1351]].map(([t, x]) => <Axis key={x} x={x} y={67} t={String(t)} />)}
      {[[8, 797], [14, 966]].map(([t, x]) => <Axis key={x} x={x} y={575} t={String(t)} />)}
      {[[3, 410], [22, 515], [23, 535], [5, 640], [8, 788], [10, 840], [11, 880], [12, 920], [13, 945], [14, 965], [17, 1122], [19, 1226], [21, 1351]].map(([t, x]) => <Axis key={x} x={x} y={675} t={String(t)} />)}
      {[['K', 269], ['J', 310], ['H', 331], ['G', 400], ['F', 445], ['E', 465], ['D', 481], ['C', 535], ['B', 547], ['B', 655], ['A', 676]].map(([t, y]) => <Axis key={'l' + y} x={216} y={y as number} t={t as string} c="#c8c8c8" s={38} />)}
      <Axis x={78} y={493} t="D" c="#d0d0d0" />
      {[['K', 269], ['J', 310], ['H', 331], ['F', 445], ['E', 465], ['B', 655], ['A', 676]].map(([t, y]) => <Axis key={'r' + y} x={1549} y={y as number} t={t as string} c="#c8c8c8" s={38} />)}
      <Axis x={1537} y={493} t="D" c="#c8c8c8" />
      <Dim x={828} y={155} t="27900" />
      {[[415, '2900'], [510, '2500'], [600, '800'], [665, '2950'], [772, '900'], [838, '2900'], [938, '900'], [1012, '2950'], [1110, '800'], [1170, '2500'], [1258, '2900']].map(([x, t]) => <Dim key={x as number} x={x as number} y={212} t={t as string} />)}
      <VDim x={248} y={515} t="1300" />
      <VDim x={303} y={650} t="3000" />
      <VDim x={303} y={540} t="12500" />
      <VDim x={355} y={716} t="2600" />
      <VDim x={355} y={640} t="3300" />
      <VDim x={355} y={530} t="500" />
      <VDim x={355} y={480} t="1000" />
      <VDim x={355} y={380} t="1900" />
      <VDim x={355} y={340} t="6000" />
      <VDim x={1435} y={716} t="2600" c="#6f6f6f" />
      <VDim x={1435} y={630} t="4800" c="#6f6f6f" />
      <VDim x={1435} y={510} t="1000" c="#6f6f6f" />
      <VDim x={1435} y={420} t="9200" c="#6f6f6f" />
      <VDim x={1435} y={330} t="6000" c="#6f6f6f" />
      <VDim x={1490} y={545} t="12500" c="#6f6f6f" />
    </g>
  </Canvas>
);

/* ---- steel symbol ---- */
const SteelGlyph = () => (
  <svg width="11" height="11" viewBox="0 0 11 11" style={{ display: 'block' }}>
    <path d="M1 3h9v4H1zM5.5 0v10M1 10h9" fill="none" stroke="#111" strokeWidth="1" />
  </svg>
);

/* ---- rebar shapes ---- */
type ShapeProps = { kind: 'A' | 'B' | 'C' | 'D'; v: string[] };
const ShapeTxt = styled.text`font: 11px ${SANS}; fill: #000;`;
const Shape = ({ kind, v }: ShapeProps) => {
  const L = (x: number, y: number, t: string) => <ShapeTxt x={x} y={y + 4}>{t}</ShapeTxt>;
  return (
    <svg width="200" height="33" viewBox="0 0 200 33" style={{ display: 'block' }}>
      {kind === 'A' && <>
        <path d="M30 12v16h76l18-23h43" fill="none" stroke="#000" strokeWidth="2" />
        <path d="M106 29h16M110 29c0-4 3-6 5-6" fill="none" stroke="#000" />
        {L(9, 18, v[0])}{L(51, 21, v[1])}{L(93, 11, v[2])}{L(140, 11, v[3])}{L(115, 22, '45')}
      </>}
      {kind === 'B' && <>
        <path d="M52 13v16h91l18-22" fill="none" stroke="#000" strokeWidth="2" />
        <path d="M143 30h12M147 30c0-4 2-6 4-6" fill="none" stroke="#000" />
        {L(30, 14, v[0])}{L(84, 22, v[1])}{L(129, 14, v[2])}{L(152, 23, '45')}
      </>}
      {kind === 'C' && <>
        <path d="M32 9v15h138" fill="none" stroke="#000" strokeWidth="2" />
        {L(9, 17, v[0])}
        <RedNum x="84" y="15">{v[1]}</RedNum>
      </>}
      {kind === 'D' && <>
        <path d="M28 27h55l42-22h52" fill="none" stroke="#000" strokeWidth="2" />
        <path d="M83 28h25M98 28c0-4-1-6-3-8" fill="none" stroke="#000" />
        {L(43, 20, v[0])}{L(80, 11, v[1])}{L(143, 11, v[2])}{L(103, 20, '45')}
      </>}
    </svg>
  );
};

const rows: { f: string; s: ShapeProps; calc: string[]; desc: string[]; len: string; n: string }[] = [
  { f: '621', s: { kind: 'A', v: ['285', '10643', '594', '80'] }, calc: ['10683+156-40+(500-40-40)/2', '+150/2+37*d'], desc: ['净长+斜长-保护层+弯折+锚', '固'], len: '11602', n: '134' },
  { f: '623', s: { kind: 'B', v: ['285', '10643', '553'] }, calc: ['10683+35-40+(500-40-40)/2+', '150/2+37*d'], desc: ['净长+斜长-保护层+弯折+锚', '固'], len: '11481', n: '2' },
  { f: '621', s: { kind: 'A', v: ['285', '15143', '594', '80'] }, calc: ['15183+156-40+(500-40-40)/2', '+150/2+37*d'], desc: ['净长+斜长-保护层+弯折+锚', '固'], len: '16102', n: '18' },
  { f: '18', s: { kind: 'C', v: ['285', '3683'] }, calc: ['3205-40+(500-40-40)/2+150/', '2+37*d'], desc: ['净长-保护层+弯折+节点设置', '锚固长度'], len: '3968', n: '33' },
  { f: '619', s: { kind: 'D', v: ['7807', '594', '80'] }, calc: ['7289+156+37*d+37*d'], desc: ['净长+斜长+节点设置锚固长', '度+锚固'], len: '8481', n: '33' },
  { f: '619', s: { kind: 'D', v: ['5001', '456', '80'] }, calc: ['4483+18+37*d+37*d'], desc: ['净长+斜长+锚固+锚固'], len: '5537', n: '2' },
  { f: '619', s: { kind: 'D', v: ['5001', '519', '80'] }, calc: ['4483+81+37*d+37*d'], desc: ['净长+斜长+锚固+锚固'], len: '5600', n: '2' },
  { f: '621', s: { kind: 'A', v: ['285', '10696', '519', '80'] }, calc: ['10736+81-40+(500-40-40)/2+', '150/2+37*d'], desc: ['净长+斜长-保护层+弯折+锚', '固'], len: '11580', n: '1' },
  { f: '621', s: { kind: 'A', v: ['285', '10696', '519', '80'] }, calc: ['10736+81-40+(500-40-40)/2+', '150/2+37*d'], desc: ['净长+斜长-保护层+弯折+锚', '固'], len: '11580', n: '1' },
];

const props = [
  ['名称', 'FBZJ-C14@150', 'm'], ['类别', '底筋', ''], ['钢筋信息', 'steel', 'm'], ['钢筋锚固', '(37)', 'm'], ['钢筋搭接', '(52)', 'm'],
  ['归类名称', 'FB-500[4196]', 'm'], ['汇总信息', '筏板主筋', ''], ['计算设置', '按默认计算设置计算', ''], ['节点设置', '按默认节点设置计算', ''],
  ['搭接设置', '按默认搭接设置计算', ''], ['长度调整(mm)', '', ''], ['备注', '', ''], ['显示样式', '', ''],
];

const Chev = ({ d }: { d: string }) => (
  <svg width="10" height="10" viewBox="0 0 10 10" style={{ display: 'block' }}><path d={d} fill="none" stroke="#606060" strokeWidth="2" /></svg>
);
const PinX = ({ c = '#fff' }: { c?: string }) => (
  <>
    <svg width="9" height="11" viewBox="0 0 9 11" style={{ display: 'block' }}><path d="M2 1h5v5H2zM0 6h9M4.5 6v5" fill="none" stroke={c} strokeWidth="1.2" /></svg>
    <svg width="9" height="9" viewBox="0 0 9 9" style={{ display: 'block' }}><path d="M1 1l7 7M8 1L1 8" fill="none" stroke={c} /></svg>
  </>
);

export default function App() {
  return (
    <Page>
      <Global />
      <MenuBar>
        {[['L)', 9], ['构件(N)', 11], ['绘图(D)', 10], ['修改(M)', 12], ['钢筋量(Q)', 11], ['视图(V)', 11], ['工具(T)', 10], ['云应用(Y)', 9], ['BIM应用(I)', 10], ['在线服务(S)', 11], ['帮助(H)', 10], ['版本号(B)', 9]].map(([t, m]) => (
          <MenuItem key={t as string} $mr={m as number}>{t}</MenuItem>
        ))}
        <MenuItem $mr={0}><Ic n="newdoc" gap={3} />新建变更<Caret $ml={6} $mr={8} /><Ic n="bot" gap={4} />广小二</MenuItem>
        <GhostBox />
        <UserBox>
          <Ic n="avatar" gap={4} />18326632027<Caret $ml={6} $mr={12} />造价豆:0
          <FaBell size={14} color="#1f7fd8" style={{ marginLeft: 9, marginRight: 9 }} /><Ic n="suggest" gap={4} />我要建议
        </UserBox>
      </MenuBar>
      <TopRow>
        <Chevrons $w={20}>»</Chevrons>
        <Bar $w={590} $h={28} $pl={4}>
          <T i="def" t="定义" mr={10} />
          <T i="sigma" t="汇总计算" gap={1} mr={7} />
          <T i="cloud" t="云检查" mr={8} />
          <T i="flat" t="平齐板顶" off mr={6} />
          <T i="binoc" t="查找图元" />
          <T i="glasses" t="查看钢筋量" />
          <T i="batch" t="批量选择" />
          <T i="rebar3d" t="钢筋三维" gap={3} />
        </Bar>
        <Chevrons $w={19}>»</Chevrons>
        <Bar $w={673} $h={28} $pl={4}>
          <Ic n="sq2d" gap={4} />二维<Caret $ml={6} $mr={8} />
          <T i="cube" t="俯视" mr={0} /><Caret $ml={6} $mr={8} />
          <T i="orbit" t="动态观察" gap={3} mr={6} />
          <T i="local3d" t="局部三维" gap={3} mr={8} />
          <Sep />
          <T i="zoomfull" t="全屏" mr={8} />
          <T i="mag" t="缩放" gap={2} mr={0} /><Caret $ml={7} $mr={8} />
          <T i="hand" t="平移" mr={0} /><Caret $ml={7} $mr={6} />
          <T i="floor" t="所有楼层" gap={3} mr={10} />
          <Sep $mr={6} />
          <T i="list" t="返回模式" mr={8} />
          <T i="stretch" t="规范" />
        </Bar>
      </TopRow>
      <Body>
        <LeftPanel>
          <BlueTitle><PinX /></BlueTitle>
          <LeftTab $h={22}>置</LeftTab>
          <LeftTab $h={22} $deep>入</LeftTab>
          <LeftFill />
          <LeftList><LeftStub /></LeftList>
          <LeftTab $h={22} $deep>输入</LeftTab>
          <LeftTab $h={22}>览</LeftTab>
        </LeftPanel>
        <Center>
          <ToolRow>
            <Bar $w={791}>
              <Grip />
              <T i="pen" t="删除" /><Sep $mr={4} />
              <T i="copy" t="复制" mr={7} />
              <T i="mirror" t="镜像" mr={6} /><Sep $mr={6} />
              <T i="move" t="移动" mr={8} />
              <T i="rotate" t="旋转" mr={5} /><Sep $mr={6} />
              <T i="extend" t="延伸" off mr={8} />
              <T i="trim" t="修剪" off mr={8} /><Sep $mr={3} />
              <T i="brk" t="打断" off mr={9} />
              <T i="merge" t="合并" off mr={5} />
              <T i="split" t="分割" off mr={6} /><Sep $mr={4} />
              <T i="align" t="对齐" off mr={0} /><Caret $off $ml={5} $mr={6} />
              <T i="offset" t="偏移" mr={6} />
              <T i="stretch" t="拉伸" /><Sep $mr={4} />
              <T i="grip" t="设置夹点" />
            </Bar>
          </ToolRow>
          <ToolRow $h={27}>
            <Bar $w={567} $h={25}>
              <Grip $mr={4} />
              <Pick t="基础层" w={57} />
              <Pick t="基础" w={69} />
              <Pick t="筏板主筋" w={68} mr={5} />
              <Pick t="FBZJ-C14" w={68} mr={5} />
              <Sep $mr={2} />
              <Press i="attr" t="属性" w={51} />
              <Press i="edit" t="编辑钢筋" w={75} mr={4} />
              <T i="list" t="构件列表" mr={7} />
              <T i="pick" t="拾取构件" />
            </Bar>
          </ToolRow>
          <ToolRow $h={31} $pt={3}>
            <Bar $w={813} $h={27}>
              <Grip $mr={4} />
              <Pressed $w={50}><Ic n="cursor" gap={2} />选择</Pressed>
              <Caret $ml={3} $mr={6} />
              <Sep $mr={6} />
              <T i="line" t="直线" off mr={7} />
              <T i="arc" t="三点画弧" off mr={0} /><Caret $off $ml={7} $mr={4} />
              <FrameCombo><Caret $off $ml={0} $mr={0} /></FrameCombo>
              <T i="rectg" t="矩形" off mr={8} /><Sep $mr={4} />
              <T i="single" t="单板" mr={7} />
              <T i="multi" t="多板" mr={8} />
              <T i="custom" t="自定义" gap={4} mr={0} /><Caret $ml={3} $mr={3} />
              <Press i="horiz" t="水平" w={50} mr={5} />
              <T i="vert" t="垂直" mr={7} />
              <T i="xy" t="XY方向" gap={3} mr={7} />
              <T i="para" t="平行边布置受力筋" gap={3} mr={0} /><Caret $ml={6} $mr={0} />
            </Bar>
            <Chevrons $w={24}>»</Chevrons>
            <Bar $w={30} $h={27} $ml={2}><Grip /></Bar>
          </ToolRow>
          <ToolRow $h={27} $pt={2}>
            <Bar $w={420} $ml={47} $h={25}>
              <Grip $mr={4} />
              <T i="twop" t="两点" gap={4} mr={7} />
              <T i="parallel" t="平行" gap={5} />
              <T i="angle" t="点角" gap={2} mr={0} /><Caret $ml={6} $mr={5} />
              <T i="arc3" t="三点辅轴" gap={5} mr={0} /><Caret $ml={6} $mr={8} />
              <T i="pen" t="删除辅轴" mr={7} />
              <T i="dim" t="尺寸标注" gap={4} mr={0} /><Caret $ml={7} $mr={0} />
            </Bar>
          </ToolRow>
          <Drawing />
          <ToolRow $h={27} $pt={2}>
            <Bar $w={209} $ml={0}>
              <Grip />
              <T i="ortho" t="正交" gap={5} mr={3} />
              <Press i="snap" t="对象捕捉" w={75} />
              <Press i="dyn" t="动态输入" w={75} />
            </Bar>
            <Bar $w={262} $ml={3}>
              <Grip $mr={3} />
              <T i="xpoint" t="交点" gap={5} mr={4} />
              <Press i="perp" t="垂点" w={51} mr={3} />
              <T i="midp" t="中点" gap={5} mr={7} />
              <T i="vertex" t="顶点" gap={3} mr={7} />
              <T i="coord" t="坐标" gap={3} />
            </Bar>
            <Bar $w={397} $ml={3} $pl={3}>
              <Grip $mr={2} />
              <Pick t="不偏移" w={57} mr={7} />
              <Sep $mr={2} />
              <FieldLabel $mr={1}>X=</FieldLabel>
              <SpinBox>0<SpinArrows><SpinUp /><SpinUp $down /></SpinArrows></SpinBox>
              <FieldLabel $mr={10}>mm</FieldLabel>
              <FieldLabel $mr={1}>Y=</FieldLabel>
              <SpinBox>0<SpinArrows><SpinUp /><SpinUp $down /></SpinArrows></SpinBox>
              <FieldLabel $mr={4}>mm</FieldLabel>
              <Sep $mr={3} />
              <Check />旋转
              <Chevrons $w={70} style={{ paddingTop: 2 }}>»</Chevrons>
            </Bar>
          </ToolRow>
          <Lower>
            <Gutter>
              <CloseMark viewBox="0 0 10 10"><rect x=".5" y=".5" width="9" height="9" fill="#f4e0e0" stroke="#803040" /><path d="M1 1l8 8M9 1L1 9" stroke="#444" /></CloseMark>
            </Gutter>
            <TableCol>
              <TableBar>
                <T i="first" t="" gap={8} mr={0} />
                <T i="prev" t="" gap={8} mr={0} />
                <T i="next" t="" gap={8} mr={0} />
                <T i="last" t="" gap={2} mr={0} />
                <Sep $ml={3} $mr={5} />
                <T i="up" t="" gap={7} mr={0} />
                <T i="down" t="" gap={7} mr={0} />
                <Sep $ml={0} $mr={5} />
                <T i="ins" t="插入" off mr={7} />
                <T i="del" t="删除" off mr={7} />
                <T i="scale" t="缩尺配筋" off mr={7} />
                <T i="info" t="钢筋信息" mr={7} />
                <T i="lib" t="钢筋图库" mr={7} />
                <T i="other" t="其他" mr={0} /><Caret $ml={3} $mr={8} />
                <ToolItem $mr={8}>关闭</ToolItem>
                <Sep $mr={6} />
                <ToolItem>单构件钢筋总重(kg):<Weight>2994.017</Weight></ToolItem>
              </TableBar>
              <TableBox>
                <GridClip>
                  <GridRow $h={20}>
                    <HeadCell />
                    <HeadCell>筋号</HeadCell>
                    <HeadCell $sel>直径<Mono>(mm)</Mono></HeadCell>
                    <HeadCell>级别</HeadCell>
                    <HeadCell>图号</HeadCell>
                    <HeadCell>图形</HeadCell>
                    <HeadCell>计算公式</HeadCell>
                    <HeadCell>公式描述</HeadCell>
                    <HeadCell>长度<Mono>(mm)</Mono></HeadCell>
                    <HeadCell style={{ justifyContent: 'flex-start', paddingLeft: 5 }}>根数</HeadCell>
                  </GridRow>
                  {rows.map((r, i) => (
                    <GridRow key={i} $h={34}>
                      {i === 0 ? <RowHead $sel>1*</RowHead> : <RowHead>{i + 1}</RowHead>}
                      <Cell><TwoLine>筏板受力筋.<br /><Mono>{i + 1}</Mono></TwoLine></Cell>
                      <Cell $mark $mono $sel={i === 0}>14</Cell>
                      <Cell $center><SteelGlyph /></Cell>
                      <Cell $mono>{r.f}</Cell>
                      <Cell $pl={0}><Shape {...r.s} /></Cell>
                      <Cell $mono><TwoLine>{r.calc.map(c => <div key={c}>{c}</div>)}</TwoLine></Cell>
                      <Cell><TwoLine>{r.desc.map(c => <div key={c}>{c}</div>)}</TwoLine></Cell>
                      <Cell $mono>{r.len}</Cell>
                      <Cell $mono>{r.n}</Cell>
                    </GridRow>
                  ))}
                </GridClip>
                <VScroll>
                  <ScrollBtn><Chev d="M1 7l4-4 4 4" /></ScrollBtn>
                  <Thumb />
                  <div style={{ flex: 1 }} />
                  <ScrollBtn><Chev d="M1 3l4 4 4-4" /></ScrollBtn>
                </VScroll>
                <HScroll>
                  <ScrollBtn><Chev d="M7 1L3 5l4 4" /></ScrollBtn>
                  <HThumb />
                  <div style={{ flex: 1 }} />
                  <ScrollBtn><Chev d="M3 1l4 4-4 4" /></ScrollBtn>
                </HScroll>
                <div />
              </TableBox>
            </TableCol>
          </Lower>
        </Center>
        <Right>
          <RightTitle>属性编辑器<span style={{ display: 'flex', gap: 9, alignItems: 'center' }}><PinX c="#222" /></span></RightTitle>
          <PropTable>
            <PropHead />
            <PropHead>属性名称</PropHead>
            <PropHead $sel>属性值</PropHead>
            {props.map(([name, val, m], i) => (
              <React.Fragment key={name}>
                <PropIndex $sel={i === 0}>{i + 1}</PropIndex>
                <PropName $sel={i === 0} $color={i === 2 ? '#0000e6' : i === 12 ? '#8a8a8a' : undefined} $plus={i === 12}>
                  {i === 12 && <PlusBox>+</PlusBox>}
                  {name === '长度调整(mm)' ? <>长度调整<Mono>(mm)</Mono></> : name}
                </PropName>
                <PropValue $sel={i === 0} $mono={m === 'm'}>
                  {val === 'steel' ? <><SteelGlyph />14@150</> : val}
                </PropValue>
              </React.Fragment>
            ))}
          </PropTable>
        </Right>
      </Body>
      <Status>
        <StatusCell $w={15} /><StatusCell $w={78} /><StatusCell $w={98} /><StatusCell $w={48} /><StatusCell $w={987} /><StatusCell />
      </Status>
      <Sogou>
        <SogouLogo>S</SogouLogo>
        <SogouCn>中</SogouCn>
        <SogouSlot>°,</SogouSlot>
        <SogouSlot><Smile size={17} color="#1a86e6" strokeWidth={2} /></SogouSlot>
        <SogouSlot><FaMicrophone size={15} /></SogouSlot>
        <SogouSlot><FaKeyboard size={17} /></SogouSlot>
        <SogouSlot><FaUserLock size={15} color="#c4ccd4" /></SogouSlot>
        <SogouSlot><FaTshirt size={16} /></SogouSlot>
        <SogouSlot><FaWrench size={14} /></SogouSlot>
      </Sogou>
    </Page>
  );
}
